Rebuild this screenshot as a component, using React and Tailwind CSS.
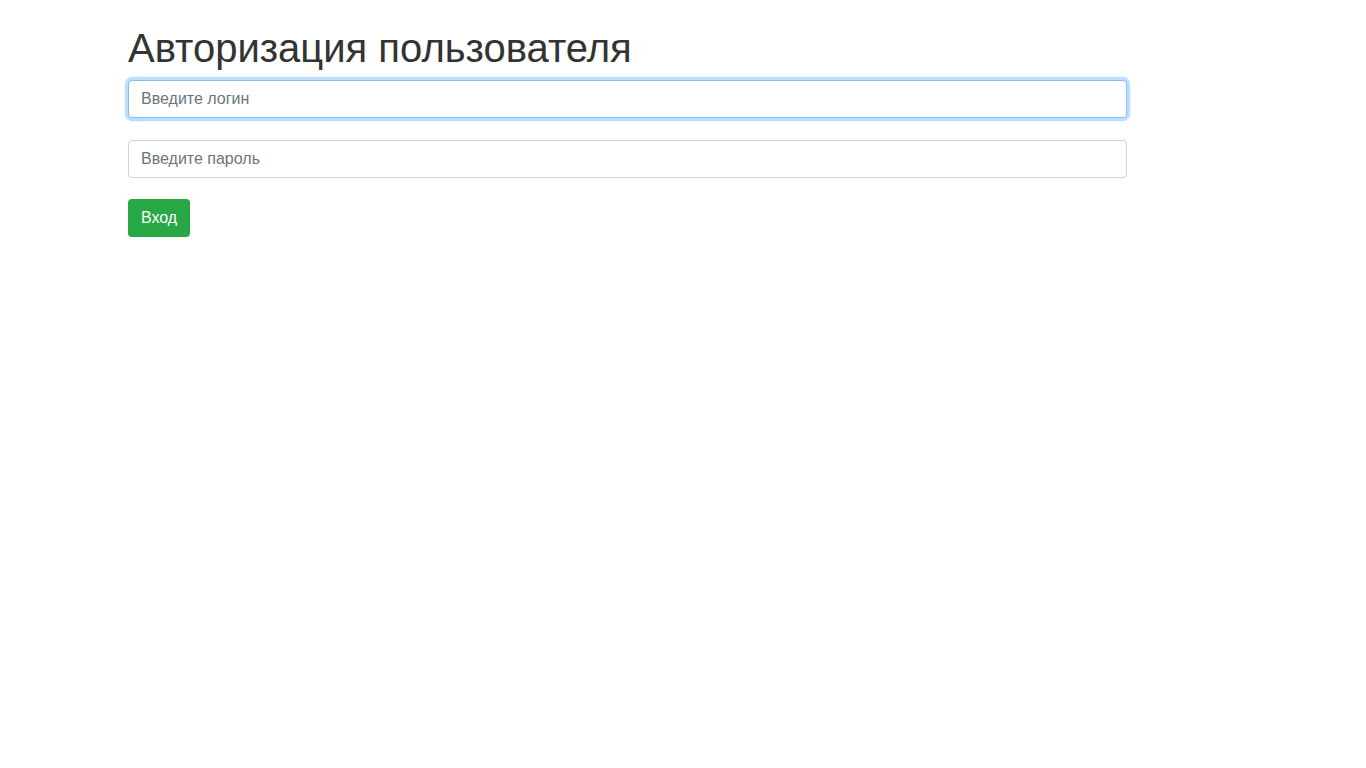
import React from "react";

const inputBase =
  "block w-full h-[38px] px-3 py-1.5 text-base text-[#495057] bg-white rounded-[4px] border outline-none placeholder:text-[#6c757d]";

export default function App() {
  return (
    <div className="min-h-screen bg-white font-['Liberation_Sans',Arial,sans-serif] text-[#212529]">
      <div className="pl-[128px] pt-[24px] w-[1127px]">
        <h1 className="text-[40px] leading-[48px] font-normal text-[#333] mb-2">Авторизация пользователя</h1>
        <form className="flex flex-col">
          <input
            type="text"
            placeholder="Введите логин"
            className={`${inputBase} border-[#80bdff] shadow-[0_0_0_3.2px_rgba(0,123,255,0.25)]`}
          />
          <input
            type="password"
            placeholder="Введите пароль"
            className={`${inputBase} border-[#ced4da] mt-[22px]`}
          />
          <div className="mt-[21px]">
            <button
              type="button"
              className="h-[38px] w-[62px] px-[13px] text-base text-white bg-[#28a745] rounded-[4px] leading-6 text-left"
            >
              Вход
            </button>
          </div>
        </form>
      </div>
    </div>
  );
}
